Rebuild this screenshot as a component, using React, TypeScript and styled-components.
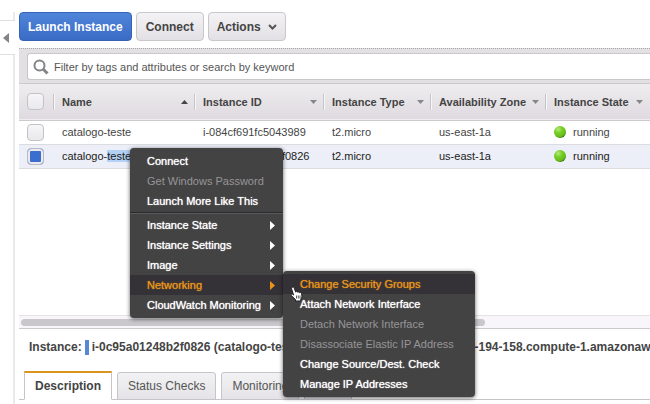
import React from "react";
import styled, { createGlobalStyle, css } from "styled-components";

const GlobalStyle = createGlobalStyle`
  *, *::before, *::after { box-sizing: border-box; }
  body {
    margin: 0;
    background: #fff;
    color: #444;
    font-family: "Liberation Sans", Arial, Helvetica, sans-serif;
    font-size: 11px;
    overflow: hidden;
  }
  button, input { font-family: inherit; }
`;

const Page = styled.div`
  position: relative;
  display: flex;
  min-height: 100vh;
  overflow: hidden;
`;

const Rail = styled.aside`
  flex: none;
  width: 15px;
  padding-top: 12px;
  display: flex;
  flex-direction: column;
`;

const RailEdge = styled.div<{ $grow?: boolean }>`
  height: 8px;
  border-right: 2px solid #ebe9ec;
  ${(p) => p.$grow && css`flex: 1;`}
`;

const CollapseButton = styled.button`
  height: 35px;
  padding: 0 0 0 3px;
  display: flex;
  align-items: center;
  background: #fff;
  border: 0;
  border-top: 1px solid #e0dee2;
  border-bottom: 1px solid #e0dee2;
`;

const Main = styled.main`
  flex: 1;
  min-width: 0;
  margin-left: 4px;
  display: flex;
  flex-direction: column;
`;

const Toolbar = styled.div`
  display: flex;
  gap: 4px;
  padding: 12px 0 7px;
`;

const ToolButton = styled.button<{ $primary?: boolean }>`
  display: flex;
  align-items: center;
  justify-content: center;
  gap: 7px;
  min-width: 68px;
  height: 29px;
  padding: 0 8px;
  border: 1px solid #c9c7cb;
  border-radius: 4px;
  background: linear-gradient(#f3f2f4, #e3e0e5);
  color: #444;
  font-size: 12px;
  font-weight: bold;
  white-space: nowrap;
  ${(p) =>
    p.$primary &&
    css`
      border-color: #3863b4;
      background: linear-gradient(#4f85d9, #3a6bc6);
      color: #fff;
    `}
`;

const FilterBar = styled.div`
  padding: 4px 0 3px 8px;
  background: #e2e0e3;
  border-top: 1px dotted #a9a9ab;
  border-bottom: 1px solid #cbc9cc;
`;

const SearchField = styled.label`
  display: flex;
  align-items: center;
  gap: 5px;
  height: 27px;
  padding-left: 5px;
  background: #fff;
  border: 1px solid #c9c7ca;
  border-right: 0;
  border-radius: 3px 0 0 3px;
`;

const SearchInput = styled.input`
  flex: 1;
  min-width: 0;
  padding: 0;
  border: 0;
  outline: 0;
  background: transparent;
  color: #555;
  font-size: 11px;
  &::placeholder { color: #555; opacity: 1; }
`;

const TablePanel = styled.section`
  flex: 1;
  overflow: hidden;
`;

const Table = styled.table`
  width: 100%;
  table-layout: fixed;
  border-collapse: collapse;
`;

const Col = styled.col<{ $w?: number }>`
  ${(p) => p.$w && css`width: ${p.$w}px;`}
`;

const HeadRow = styled.tr`
  height: 36px;
  background: linear-gradient(#efedf0, #dedadf);
  border-bottom: 1px solid #cccacd;
`;

const HeadCell = styled.th`
  padding: 0;
  text-align: left;
`;

const HeadInner = styled.div`
  display: flex;
  align-items: center;
  height: 16px;
  padding-left: 8px;
  border-left: 1px solid #c6c4c8;
  box-shadow: inset 1px 0 #f6f5f7;
`;

const SortButton = styled.button`
  flex: 1;
  display: flex;
  align-items: center;
  justify-content: space-between;
  padding: 0 6px 0 0;
  border: 0;
  background: none;
  color: #444;
  font-size: 11px;
  font-weight: bold;
  white-space: nowrap;
`;

const Row = styled.tr<{ $selected?: boolean }>`
  height: 24px;
  border-bottom: 1px solid #dcdce0;
  background: ${(p) => (p.$selected ? "#eceef8" : "#fff")};
  color: ${(p) => (p.$selected ? "#1c1c20" : "#444")};
`;

const Cell = styled.td`
  padding: 0 0 0 9px;
  line-height: 16px;
  white-space: nowrap;
`;

const State = styled.span`
  display: flex;
  align-items: center;
  gap: 7px;
`;

const Highlight = styled.mark`
  background: #b3d0f5;
  color: inherit;
`;

const Tick = styled.input`
  appearance: none;
  display: block;
  width: 17px;
  height: 17px;
  margin: 0 0 0 8px;
  border: 1px solid #c4c2c6;
  border-radius: 4px;
  background: linear-gradient(#f6f5f7, #e9e8ea);
  &:checked {
    border-color: #b8bac4;
    background: #3b6fce;
    box-shadow: inset 0 0 0 2px #eceaf0;
  }
`;

const ScrollTrack = styled.div`
  height: 14px;
  padding: 3px 2px;
  background: #f9f6fb;
  border-top: 1px solid #e4e2e5;
  border-bottom: 1px solid #cccacd;
`;

const ScrollThumb = styled.div`
  width: 74%;
  height: 7px;
  border-radius: 4px;
  background: #c9c7ca;
`;

const Detail = styled.section`
  overflow: hidden;
`;

const DetailTitle = styled.h2`
  display: flex;
  align-items: center;
  height: 36px;
  margin: 0;
  padding-left: 10px;
  font-size: 12px;
  line-height: 16px;
  white-space: nowrap;
`;

const Swatch = styled.span`
  flex: none;
  width: 4px;
  height: 15px;
  margin: 0 3px;
  background: #5488d6;
`;

const Dns = styled.span`
  margin-left: 38px;
`;

const Tabs = styled.div`
  display: flex;
  gap: 5px;
  margin: 6px 0 4px;
  padding-left: 5px;
  height: 29px;
  box-shadow: inset 0 -1px #c6c4c8;
`;

const Tab = styled.button<{ $active?: boolean }>`
  padding: 0 10px;
  margin-top: 1px;
  border: 1px solid #c6c4c8;
  border-radius: 3px 3px 0 0;
  background: linear-gradient(#f2f1f3, #e5e3e7);
  color: #555;
  font-size: 12px;
  white-space: nowrap;
  ${(p) =>
    p.$active &&
    css`
      margin-top: 0;
      border-top: 2px solid #dc941f;
      border-bottom-color: #fff;
      border-radius: 0;
      background: #fff;
      color: #444;
      font-weight: bold;
    `}
`;

const Menu = styled.div<{ $x: number; $y: number; $w: number }>`
  position: absolute;
  left: ${(p) => p.$x}px;
  top: ${(p) => p.$y}px;
  width: ${(p) => p.$w}px;
  padding: 3px 0;
  border-radius: 4px;
  background: #434343;
  box-shadow: 0 1px 4px rgba(0, 0, 0, 0.6);
`;

const MenuItem = styled.button<{ $active?: boolean }>`
  display: flex;
  align-items: center;
  justify-content: space-between;
  width: 100%;
  height: 20px;
  padding: 0 8px 0 17px;
  border: 0;
  background: ${(p) => (p.$active ? "#353237" : "transparent")};
  color: ${(p) => (p.$active ? "#e8951c" : "#fff")};
  font-size: 11px;
  text-shadow: 0 0 1px currentColor;
  white-space: nowrap;
  &:disabled { color: #979598; text-shadow: none; }
`;

const Separator = styled.hr`
  height: 2px;
  margin: 1px 0;
  border: 0;
  border-top: 1px solid #2d2b2f;
  border-bottom: 1px solid #5a585b;
`;

const Pointer = styled.svg`
  position: absolute;
  left: 290px;
  top: 286px;
`;

const Caret = ({ up }: { up?: boolean }) => (
  <svg width="7" height="4" viewBox="0 0 7 4" aria-hidden="true">
    <path d={up ? "M0 4 3.5 0 7 4z" : "M0 0h7L3.5 4z"} fill={up ? "#444" : "#88868a"} />
  </svg>
);

const SubArrow = () => (
  <svg width="5" height="9" viewBox="0 0 5 9" aria-hidden="true">
    <path d="M0 0 5 4.500 0 9z" fill="currentColor" />
  </svg>
);

const StatusDot = () => (
  <svg width="12" height="12" viewBox="0 0 12 12" aria-hidden="true">
    <defs>
      <radialGradient id="dot" cx="35%" cy="28%" r="75%">
        <stop offset="0" stopColor="#b4ec80" />
        <stop offset=".4" stopColor="#7ad02a" />
        <stop offset=".85" stopColor="#62bd14" />
        <stop offset="1" stopColor="#2f6a0c" />
      </radialGradient>
    </defs>
    <circle cx="6" cy="6" r="6" fill="url(#dot)" />
  </svg>
);

const columns = [
  { label: "Name", width: 141, sorted: true },
  { label: "Instance ID", width: 129 },
  { label: "Instance Type", width: 107 },
  { label: "Availability Zone", width: 115 },
  { label: "Instance State", width: 104 },
];

const instances = [
  { name: "catalogo-", rest: "teste", id: "i-084cf691fc5043989", type: "t2.micro", zone: "us-east-1a", state: "running", selected: false },
  { name: "catalogo-", rest: "teste", id: "i-0c95a01248b2f0826", type: "t2.micro", zone: "us-east-1a", state: "running", selected: true },
];

const submenus = ["Instance State", "Instance Settings", "Image", "Networking", "CloudWatch Monitoring"];

const networking = [
  { label: "Change Security Groups", active: true },
  { label: "Attach Network Interface" },
  { label: "Detach Network Interface", disabled: true },
  { label: "Disassociate Elastic IP Address", disabled: true },
  { label: "Change Source/Dest. Check" },
  { label: "Manage IP Addresses" },
];

export default function App() {
  return (
    <Page>
      <GlobalStyle />
      <Rail>
        <RailEdge />
        <CollapseButton aria-label="Collapse navigation">
          <svg width="6" height="10" viewBox="0 0 6 10" aria-hidden="true">
            <path d="M6 0v10L0 5z" fill="#858387" />
          </svg>
        </CollapseButton>
        <RailEdge $grow />
      </Rail>

      <Main>
        <Toolbar>
          <ToolButton $primary>Launch Instance</ToolButton>
          <ToolButton>Connect</ToolButton>
          <ToolButton>
            Actions
            <svg width="9" height="6" viewBox="0 0 9 6" aria-hidden="true">
              <path d="M1 1l3.500 3.500L8 1" fill="none" stroke="#555" strokeWidth="2" />
            </svg>
          </ToolButton>
        </Toolbar>

        <FilterBar>
          <SearchField>
            <svg width="16" height="16" viewBox="0 0 16 16" aria-hidden="true">
              <circle cx="6.500" cy="6.500" r="5" fill="none" stroke="#858387" strokeWidth="2" />
              <path d="M10.300 10.300 14.500 14.500" stroke="#858387" strokeWidth="3" />
            </svg>
            <SearchInput
              type="text"
              aria-label="Filter instances"
              placeholder="Filter by tags and attributes or search by keyword"
            />
          </SearchField>
        </FilterBar>

        <TablePanel>
          <Table>
            <colgroup>
              <Col $w={34} />
              {columns.map((c) => (
                <Col key={c.label} $w={c.width} />
              ))}
              <Col />
            </colgroup>
            <thead>
              <HeadRow>
                <HeadCell>
                  <Tick type="checkbox" aria-label="Select all instances" />
                </HeadCell>
                {columns.map((c) => (
                  <HeadCell key={c.label} scope="col">
                    <HeadInner>
                      <SortButton>
                        {c.label}
                        <Caret up={c.sorted} />
                      </SortButton>
                    </HeadInner>
                  </HeadCell>
                ))}
                <HeadCell aria-hidden="true" />
              </HeadRow>
            </thead>
            <tbody>
              {instances.map((i) => (
                <Row key={i.id} $selected={i.selected}>
                  <HeadCell as="td">
                    <Tick type="checkbox" defaultChecked={i.selected} aria-label={`Select ${i.id}`} />
                  </HeadCell>
                  <Cell>
                    {i.name}
                    {i.selected ? <Highlight>{i.rest}</Highlight> : i.rest}
                  </Cell>
                  <Cell>{i.id}</Cell>
                  <Cell>{i.type}</Cell>
                  <Cell>{i.zone}</Cell>
                  <Cell>
                    <State>
                      <StatusDot />
                      {i.state}
                    </State>
                  </Cell>
                  <td />
                </Row>
              ))}
            </tbody>
          </Table>
        </TablePanel>

        <ScrollTrack>
          <ScrollThumb />
        </ScrollTrack>

        <Detail>
          <DetailTitle>
            Instance: <Swatch />
            i-0c95a01248b2f0826 (catalogo-teste)
            <Dns>Public DNS: ec2-54-227-194-158.compute-1.amazonaws.com</Dns>
          </DetailTitle>
          <Tabs role="tablist">
            <Tab role="tab" aria-selected="true" $active>Description</Tab>
            <Tab role="tab">Status Checks</Tab>
            <Tab role="tab">Monitoring</Tab>
            <Tab role="tab">Tags</Tab>
          </Tabs>
        </Detail>
      </Main>

      <Menu role="menu" aria-label="Instance actions" $x={130} $y={148} $w={153}>
        <MenuItem role="menuitem">Connect</MenuItem>
        <MenuItem role="menuitem" disabled>Get Windows Password</MenuItem>
        <MenuItem role="menuitem">Launch More Like This</MenuItem>
        <Separator />
        {submenus.map((label) => (
          <MenuItem key={label} role="menuitem" aria-haspopup="menu" $active={label === "Networking"}>
            {label}
            <SubArrow />
          </MenuItem>
        ))}
      </Menu>

      <Menu role="menu" aria-label="Networking" $x={283} $y={271} $w={192}>
        {networking.map((n) => (
          <MenuItem key={n.label} role="menuitem" $active={n.active} disabled={n.disabled}>
            {n.label}
          </MenuItem>
        ))}
      </Menu>

      <Pointer width="13" height="16" viewBox="0 0 13 16" aria-hidden="true">
        <path
          d="M2 1.500C3 .500 4 1.200 4.300 2.200L5.600 6 C6.200 5.200 7.300 5.400 7.600 6.200 8.200 5.600 9.300 5.900 9.500 6.700 10.500 6.200 11.600 6.900 11.700 8L12 11 10.800 13V15H5.500V13.500L1.300 9.500C.600 8.600 1.500 7.700 2.500 8.200L3.600 9 1.700 3.200C1.400 2.500 1.500 2 2 1.500z"
          fill="#fff"
          stroke="#222"
          strokeWidth="1"
        />
        <path d="M6.500 9.500v3M8.300 9.500v3M10 9.500v3" stroke="#333" strokeWidth=".8" />
      </Pointer>
    </Page>
  );
}
